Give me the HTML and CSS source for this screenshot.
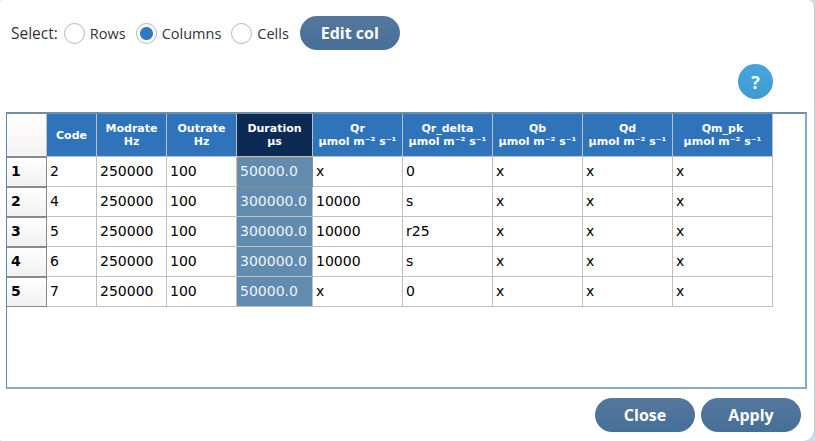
FILE: index.html
```html
<!DOCTYPE html>
<html lang="en">
<head>
<meta charset="utf-8">
<title>Edit table</title>
<link rel="stylesheet" href="styles.css">
</head>
<body>
<main class="dialog">
  <div class="toolbar">
    <span class="select-label">Select:</span>
    <label class="radio-item"><span class="radio"></span><span>Rows</span></label>
    <label class="radio-item"><span class="radio checked"></span><span>Columns</span></label>
    <label class="radio-item"><span class="radio"></span><span>Cells</span></label>
    <button class="btn edit-btn">Edit col</button>
  </div>
  <div class="help-row"><button class="help">?</button></div>
  <div class="panel">
    <table class="grid">
      <colgroup>
        <col class="c-idx"><col class="c-code"><col class="c-rate"><col class="c-rate"><col class="c-dur"><col class="c-q"><col class="c-q"><col class="c-q"><col class="c-q"><col class="c-qm">
      </colgroup>
      <thead>
        <tr>
          <th class="corner"></th>
          <th>Code</th>
          <th>Modrate<br>Hz</th>
          <th>Outrate<br>Hz</th>
          <th class="sel-head">Duration<br>µs</th>
          <th>Qr<br>µmol m⁻² s⁻¹</th>
          <th>Qr_delta<br>µmol m⁻² s⁻¹</th>
          <th>Qb<br>µmol m⁻² s⁻¹</th>
          <th>Qd<br>µmol m⁻² s⁻¹</th>
          <th>Qm_pk<br>µmol m⁻² s⁻¹</th>
        </tr>
      </thead>
      <tbody>
        <tr><th class="idx">1</th><td>2</td><td>250000</td><td>100</td><td class="sel current">50000.0</td><td>x</td><td>0</td><td>x</td><td>x</td><td>x</td></tr>
        <tr><th class="idx">2</th><td>4</td><td>250000</td><td>100</td><td class="sel">300000.0</td><td>10000</td><td>s</td><td>x</td><td>x</td><td>x</td></tr>
        <tr><th class="idx">3</th><td>5</td><td>250000</td><td>100</td><td class="sel">300000.0</td><td>10000</td><td>r25</td><td>x</td><td>x</td><td>x</td></tr>
        <tr><th class="idx">4</th><td>6</td><td>250000</td><td>100</td><td class="sel">300000.0</td><td>10000</td><td>s</td><td>x</td><td>x</td><td>x</td></tr>
        <tr><th class="idx">5</th><td>7</td><td>250000</td><td>100</td><td class="sel">50000.0</td><td>x</td><td>0</td><td>x</td><td>x</td><td>x</td></tr>
      </tbody>
    </table>
  </div>
  <div class="actions">
    <button class="btn action-btn">Close</button>
    <button class="btn action-btn">Apply</button>
  </div>
</main>
</body>
</html>
```

FILE: styles.css
```css
* { box-sizing: border-box; }
html, body { margin: 0; padding: 0; background: #cfdbe6; }
body { width: 815px; height: 441px; overflow: hidden; }

.dialog {
  width: 815px;
  height: 441px;
  background: #fff;
  border-right: 1px solid #c4c7cc;
  border-radius: 2px 7px 12px 2px;
  padding: 16px 0 0 6px;
  font-family: "Open Sans", sans-serif;
  color: #333;
}

.toolbar { display: flex; align-items: center; height: 34px; font-size: 14.5px; padding-left: 5px; }
.select-label { font-size: 15.5px; margin-right: 6px; }
.radio-item { display: flex; align-items: center; margin-right: 10px; gap: 5px; }
.radio {
  width: 21px; height: 21px; border-radius: 50%;
  border: 1px solid #b4b4b4; background: #fff; flex: none;
}
.radio.checked { background: radial-gradient(circle, #2f78c4 0 6px, #fff 7px); }

.btn {
  border: 0; border-radius: 17px; color: #fff;
  font-family: "Open Sans", sans-serif; font-weight: 700;
  background: linear-gradient(#55779d, #466f97);
  height: 34px; padding: 0;
}
.edit-btn { width: 100px; font-size: 16px; margin-left: 1px; }

.help-row { display: flex; justify-content: flex-end; height: 62px; padding: 14px 41px 0 0; }
.help {
  width: 35px; height: 35px; border-radius: 50%; border: 0; padding: 0;
  background: linear-gradient(#44a6dc, #3f9cd0); color: #fff;
  font: 700 18px "Open Sans", sans-serif;
}

.panel {
  width: 801px; height: 277px;
  border: 2px solid #8aaac4;
  border-top-color: #6f8ea8; border-left: 1px solid #5f87a8;
  background: #fff;
}

.grid {
  border-collapse: separate; border-spacing: 0; table-layout: fixed; width: 766px;
  font-family: "DejaVu Sans", sans-serif; font-size: 14px; color: #000;
}
.c-idx { width: 40px; } .c-code { width: 50px; } .c-rate { width: 70px; }
.c-dur { width: 76px; } .c-q { width: 90px; } .c-qm { width: 100px; }

thead th {
  height: 43px; padding: 0;
  background: #2f73bb; color: #fff;
  font-size: 11px; font-weight: 700; line-height: 13px;
  border-right: 1px solid #c0c0c0; border-bottom: 1px solid #c0c0c0;
}
thead th.corner {
  background: linear-gradient(#fff, #f3f3f3);
  border-bottom: 1px solid #8a8a8a;
}
thead th.sel-head { background: #0b2a54; }

td {
  height: 30px; padding: 0 0 2px 3px; white-space: nowrap; overflow: hidden;
  border-right: 1px solid #c0c0c0; border-bottom: 1px solid #c0c0c0;
}
td.sel { background: #618baf; color: #eef3f7; }
td.current { border: 1px dotted #c08a5a; padding-left: 2px; }

th.idx {
  height: 30px; padding: 0 0 2px 4px; text-align: left; font-size: 14px; font-weight: 700; color: #000;
  background: linear-gradient(#fff, #f1f1f1);
  border-top: 1px solid #8a8a8a; border-right: 1px solid #8a8a8a; border-bottom: 1px solid #8a8a8a;
}

.actions { display: flex; justify-content: flex-end; gap: 6px; padding: 9px 6px 0 0; width: 801px; }
.action-btn { width: 100px; font-size: 16px; }
```
